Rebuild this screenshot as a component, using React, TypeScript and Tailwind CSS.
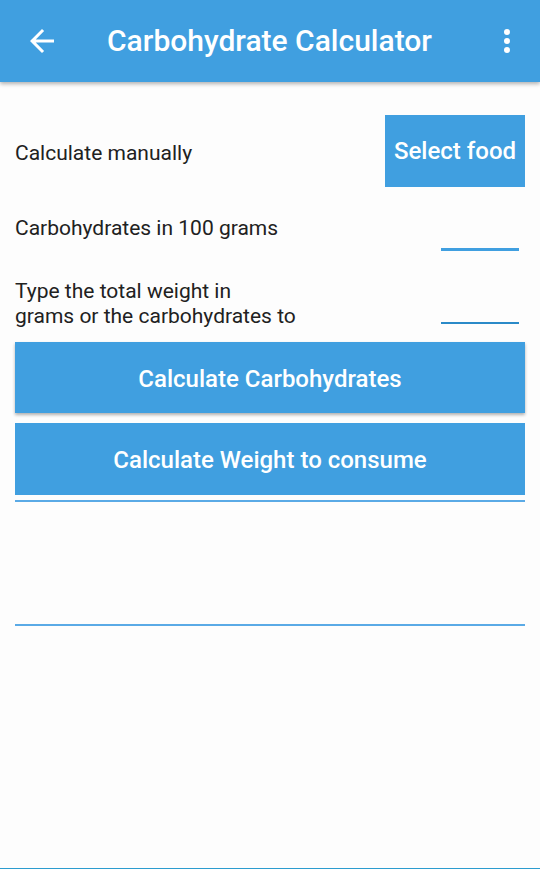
import { useState } from "react";

function BackIcon() {
  return (
    <svg width="36" height="36" viewBox="0 0 24 24" fill="white">
      <path d="M20 11H7.83l5.59-5.59L12 4l-8 8 8 8 1.41-1.41L7.83 13H20v-2z" />
    </svg>
  );
}

function MoreIcon() {
  return (
    <svg width="36" height="36" viewBox="0 0 24 24" fill="white">
      <circle cx="12" cy="6" r="2" />
      <circle cx="12" cy="12" r="2" />
      <circle cx="12" cy="18" r="2" />
    </svg>
  );
}

export default function App() {
  const [per100, setPer100] = useState("");
  const [total, setTotal] = useState("");

  return (
    <div className="w-[540px] h-[869px] bg-[#fdfdfd] flex flex-col font-['Roboto',sans-serif] text-[#212121] border-b border-[#2c9ccf]">
      {/* toolbar */}
      <div className="h-[82px] bg-[#409fe0] flex items-center shadow-[0_2px_4px_rgba(0,0,0,0.3)] z-10 shrink-0">
        <div className="w-[24px]" />
        <BackIcon />
        <div className="flex-1 text-center text-white text-[30px] font-medium leading-[36px] pr-[10px]">
          Carbohydrate Calculator
        </div>
        <MoreIcon />
        <div className="w-[15px]" />
      </div>

      <div className="flex flex-col px-[15px]">
        <div className="flex items-center justify-between mt-[33px] h-[72px]">
          <span className="text-[21px] leading-[26px] mt-[4px]">Calculate manually</span>
          <button className="w-[140px] h-[72px] bg-[#409fe0] text-white text-[24px] font-medium">
            Select food
          </button>
        </div>

        <div className="flex items-start justify-between mt-[28px]">
          <span className="text-[21px] leading-[26px]">Carbohydrates in 100 grams</span>
          <input
            value={per100}
            onChange={(e) => setPer100(e.target.value)}
            className="w-[78px] mr-[6px] mt-[16px] h-[20px] border-b-[3px] border-[#409fe0] bg-transparent outline-none"
          />
        </div>

        <div className="flex items-end justify-between mt-[28px]">
          <span className="text-[21px] leading-[25px]">
            Type the total weight in
            <br />
            grams or the carbohydrates to
          </span>
          <input
            value={total}
            onChange={(e) => setTotal(e.target.value)}
            className="w-[78px] mr-[6px] mb-[5px] h-[20px] border-b-2 border-[#2a8ac8] bg-transparent outline-none"
          />
        </div>

        <button className="mt-[13px] h-[71px] pt-[3px] bg-[#409fe0] text-white text-[24px] font-medium shadow-[0_2px_3px_rgba(0,0,0,0.3)]">
          Calculate Carbohydrates
        </button>
        <button className="mt-[10px] h-[72px] pt-[2px] bg-[#409fe0] text-white text-[24px] font-medium">
          Calculate Weight to consume
        </button>

        <div className="mt-[5px] h-[2px] bg-[#5aaae6]" />
        <div className="h-[122px]" />
        <div className="h-[2px] bg-[#5aaae6]" />
      </div>
    </div>
  );
}
